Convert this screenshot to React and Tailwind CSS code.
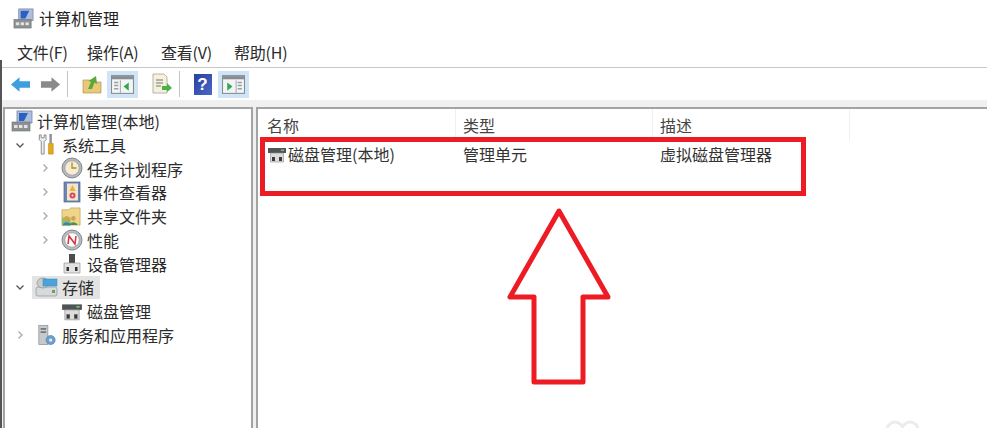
import React from 'react';

const FONT = '"Noto Sans CJK SC", "Liberation Sans", sans-serif';

// shared small drive icon used in tree and list
const DiskIcon = ({ className }) => (
    <svg viewBox="0 0 20 20" className={className}>
        <rect x="1" y="4" width="18" height="5" fill="#4f5455" />
        <rect x="14" y="5.5" width="3" height="1.5" fill="#7fc06a" />
        <path d="M3.5 9 h13 v9 h-13 Z" fill="#dcdcdc" stroke="#8a8a8a" strokeWidth="0.6" />
        <rect x="5" y="13" width="3" height="4" fill="#3c3c3c" />
        <rect x="12" y="13" width="3" height="4" fill="#3c3c3c" />
    </svg>
);

const ComputerIcon = ({ className }) => (
    <svg viewBox="0 0 22 22" className={className}>
        <rect x="6" y="1" width="15" height="12" fill="#aebfdb" stroke="#73859f" strokeWidth="0.8" />
        <path d="M8 3 h9 l-4 8 H8 Z" fill="#2a5fc4" />
        <rect x="1" y="12" width="18" height="9" fill="#8c9294" stroke="#6b6f70" strokeWidth="0.6" />
        <rect x="3" y="15" width="3.5" height="3" fill="#e4e4e4" />
        <rect x="8" y="15" width="3.5" height="3" fill="#e4e4e4" />
        <rect x="13" y="15" width="3.5" height="3" fill="#e4e4e4" />
    </svg>
);

const ToolsIcon = ({ className }) => (
    <svg viewBox="0 0 20 24" className={className}>
        <path d="M2 2 L2 7 L4 9 L4 22 L7 22 L7 9 L9 7 L9 2 L7 2 L7 5 L4 5 L4 2 Z" fill="#eceff0" stroke="#7a7f82" strokeWidth="0.9" />
        <rect x="12.5" y="1" width="2.6" height="10" fill="#8f9498" />
        <path d="M11.5 11 h5 v11 h-5 Z" fill="#e8a917" stroke="#a87a10" strokeWidth="0.5" />
    </svg>
);

const ClockIcon = ({ className }) => (
    <svg viewBox="0 0 22 22" className={className}>
        <circle cx="11" cy="11" r="10" fill="#b4b8bb" stroke="#83888b" />
        <circle cx="11" cy="11" r="7.2" fill="#f6ecd2" stroke="#8f9396" strokeWidth="0.6" />
        <path d="M11 5.5 V11 H15.5" fill="none" stroke="#b08a2c" strokeWidth="1.3" />
    </svg>
);

const EventIcon = ({ className }) => (
    <svg viewBox="0 0 20 22" className={className}>
        <rect x="2" y="1" width="16" height="20" fill="#6f86b4" stroke="#4d628c" strokeWidth="0.7" />
        <rect x="5" y="2.5" width="11" height="17" fill="#f1e6cc" />
        <path d="M10.5 4 L13.5 10 H7.5 Z" fill="#e9b52e" />
        <circle cx="10.5" cy="14.5" r="3" fill="#d94a55" />
        <circle cx="10.5" cy="14.5" r="1" fill="#f8e6e6" />
    </svg>
);

const ShareIcon = ({ className }) => (
    <svg viewBox="0 0 22 22" className={className}>
        <path d="M1 4 H8 L10 2 H20 V20 H1 Z" fill="#efd58a" stroke="#bd9c4e" strokeWidth="0.7" />
        <path d="M1 12 H10 V21 H1 Z" fill="#8fbf6a" />
        <circle cx="6" cy="13" r="2.4" fill="#d9a050" />
        <circle cx="13" cy="13" r="2.4" fill="#d9a050" />
        <path d="M2 20 c0 -4 8 -4 8 0 Z" fill="#3f7fc0" />
        <path d="M9 20 c0 -4 8 -4 8 0 Z" fill="#4d8f50" />
    </svg>
);

const PerfIcon = ({ className }) => (
    <svg viewBox="0 0 22 22" className={className}>
        <circle cx="11" cy="11" r="10" fill="#b9bcbe" stroke="#83888b" />
        <circle cx="11" cy="11" r="7.2" fill="#fbfbfb" stroke="#8f9396" strokeWidth="0.6" />
        <path d="M7 15 L8 7 L14 15 L15 7" fill="none" stroke="#d4343c" strokeWidth="1.5" />
    </svg>
);

const DeviceIcon = ({ className }) => (
    <svg viewBox="0 0 20 22" className={className}>
        <rect x="7" y="1" width="6" height="9" fill="#4a4d50" />
        <path d="M2 10 H18 V20 H2 Z" fill="#e2e2e2" stroke="#8a8a8a" strokeWidth="0.6" />
        <rect x="4.5" y="14" width="2.5" height="4" fill="#333" />
        <rect x="13" y="14" width="2.5" height="4" fill="#333" />
    </svg>
);

const StorageIcon = ({ className }) => (
    <svg viewBox="0 0 24 22" className={className}>
        <rect x="1" y="11" width="21" height="9" rx="2" fill="#d7dadb" stroke="#8b9092" strokeWidth="0.7" />
        <rect x="17" y="14" width="3" height="3" fill="#62a84f" />
        <ellipse cx="8" cy="7" rx="6" ry="5" fill="#c9cccd" stroke="#8b9092" strokeWidth="0.7" />
        <rect x="8" y="3" width="14" height="7" fill="#4ba3dc" stroke="#3b84b4" strokeWidth="0.5" />
    </svg>
);

const ServiceIcon = ({ className }) => (
    <svg viewBox="0 0 22 24" className={className}>
        <rect x="2" y="1" width="10" height="21" fill="#c6cacc" stroke="#7f8486" strokeWidth="0.7" />
        <rect x="4" y="4" width="6" height="1.5" fill="#5d6163" />
        <rect x="4" y="7.5" width="6" height="1.5" fill="#5d6163" />
        <circle cx="15" cy="17" r="5" fill="#6c9fd0" stroke="#4f7fad" strokeWidth="0.7" />
        <circle cx="15" cy="17" r="1.8" fill="#e2edf6" />
    </svg>
);

const Chevron = ({ open }) => (
    <svg viewBox="0 0 10 10" className="w-[10px] h-[10px]">
        <path
            d={open ? 'M1.5 3.5 L5 7 L8.5 3.5' : 'M3.5 1.5 L7 5 L3.5 8.5'}
            fill="none"
            stroke={open ? '#555' : '#a9a9a9'}
            strokeWidth="1.3"
        />
    </svg>
);

const TreeRow = ({ indent, arrow, icon, label, selected }) => (
    <div className="h-[23.8px] flex items-center text-[16px] text-[#2b2b2b] whitespace-nowrap">
        <div className={indent === 0 ? 'w-[2px]' : indent === 1 ? 'w-[10px]' : 'w-[35px]'} />
        {indent > 0 && (
            <div className="w-[17px] flex justify-start">
                {arrow && <Chevron open={arrow === 'open'} />}
            </div>
        )}
        <div className={`flex items-center h-full pl-[2px] ${selected ? 'bg-[#e3e3e3] pr-[6px]' : ''}`}>
            <div className="w-[25px] flex justify-center">{icon}</div>
            <span className="pl-[3px]">{label}</span>
        </div>
    </div>
);

const ToolbarButton = ({ active, children }) => (
    <div className={`h-[27px] w-[31px] flex items-center justify-center ${active ? 'bg-[#cfe4f7]' : ''}`}>
        {children}
    </div>
);

const PaneIcon = ({ side }) => (
    <svg viewBox="0 0 22 18" className="w-[23px] h-[19px]">
        <rect x="0.5" y="0.5" width="21" height="17" fill="#f2f4f5" stroke="#868c90" />
        <rect x="1" y="1" width="20" height="3" fill="#868c90" />
        {side === 'left' ? (
            <>
                <path d="M3 7 H7 M3 10 H7 M3 13 H7" stroke="#9aa0a4" strokeWidth="1.4" />
                <rect x="8.5" y="5" width="1" height="12" fill="#a8adb0" />
                <path d="M17 7 L12 11 L17 15 Z" fill="#2fa84a" />
            </>
        ) : (
            <>
                <path d="M15 7 H19 M15 10 H19 M15 13 H19" stroke="#9aa0a4" strokeWidth="1.4" />
                <rect x="13" y="5" width="1" height="12" fill="#a8adb0" />
                <path d="M5 7 L10 11 L5 15 Z" fill="#2fa84a" />
            </>
        )}
    </svg>
);

const App = () => {
    return (
        <div className="w-[987px] h-[428px] overflow-hidden bg-white relative flex flex-col" style={{ fontFamily: FONT }}>
            {/* title bar */}
            <div className="h-[36px] flex items-center pl-[13px] gap-[5px] text-[16px] text-[#222]">
                <ComputerIcon className="w-[21px] h-[21px]" />
                <span>计算机管理</span>
            </div>

            {/* menu */}
            <div className="h-[32px] flex items-center pl-[17px] text-[16px] tracking-[-0.2px] text-[#2b2b2b] border-b border-[#c9c9c9]">
                <span className="w-[70px]">文件(F)</span>
                <span className="w-[74px]">操作(A)</span>
                <span className="w-[73px]">查看(V)</span>
                <span>帮助(H)</span>
            </div>

            {/* toolbar */}
            <div className="h-[32px] flex items-center pl-[10px] bg-white">
                <svg viewBox="0 0 22 16" className="w-[21px] h-[17px]">
                    <path d="M1 8 L10 0.5 V4.5 H21 V11.5 H10 V15.5 Z" fill="#3d9fe0" />
                </svg>
                <svg viewBox="0 0 22 16" className="w-[21px] h-[17px] ml-[9px]">
                    <path d="M21 8 L12 0.5 V4.5 H1 V11.5 H12 V15.5 Z" fill="#8a8a8a" />
                </svg>
                <div className="w-px h-[26px] bg-[#c4c4c4] ml-[6px] mr-[8px]" />
                <ToolbarButton>
                    <svg viewBox="0 0 20 20" className="w-[20px] h-[20px]">
                        <path d="M1 6 H8 L9 8 H19 V19 H1 Z" fill="#e9c878" stroke="#b0935a" strokeWidth="0.7" />
                        <path d="M6 15 L9 8 L6.5 7 L14 2 L15 10 L12.5 8.5 L10 15 Z" fill="#5aa83a" />
                    </svg>
                </ToolbarButton>
                <ToolbarButton active><PaneIcon side="left" /></ToolbarButton>
                <div className="w-[8px]" />
                <ToolbarButton>
                    <svg viewBox="0 0 22 22" className="w-[22px] h-[22px]">
                        <path d="M2 1 H13 L16 4 V20 H2 Z" fill="#f5f1dd" stroke="#9a9a8a" strokeWidth="0.7" />
                        <path d="M5 7 H12 M5 10 H12 M5 13 H10" stroke="#777" strokeWidth="1" />
                        <path d="M11 13 H16 V10 L21 15 L16 19 V17 H11 Z" fill="#4fb04a" />
                    </svg>
                </ToolbarButton>
                <div className="w-px h-[26px] bg-[#c4c4c4] ml-[2px] mr-[7px]" />
                <ToolbarButton>
                    <div className="w-[18px] h-[21px] bg-gradient-to-br from-[#2a3f9e] to-[#4a68c8] text-white text-[17px] font-bold flex items-center justify-center leading-none" style={{ fontFamily: '"Liberation Sans", sans-serif' }}>?</div>
                </ToolbarButton>
                <ToolbarButton active><PaneIcon side="right" /></ToolbarButton>
            </div>

            {/* panels */}
            <div className="flex-1 min-h-0 bg-[#f0f0f0] pt-[7px] pl-[3px] flex gap-[3px]">
                <div className="w-[250px] bg-white border-2 border-[#a3a3a3] border-b-0">
                    <TreeRow indent={0} icon={<ComputerIcon className="w-[22px] h-[22px]" />} label="计算机管理(本地)" />
                    <TreeRow indent={1} arrow="open" icon={<ToolsIcon className="w-[20px] h-[23px]" />} label="系统工具" />
                    <TreeRow indent={2} arrow="closed" icon={<ClockIcon className="w-[22px] h-[22px]" />} label="任务计划程序" />
                    <TreeRow indent={2} arrow="closed" icon={<EventIcon className="w-[20px] h-[22px]" />} label="事件查看器" />
                    <TreeRow indent={2} arrow="closed" icon={<ShareIcon className="w-[21px] h-[21px]" />} label="共享文件夹" />
                    <TreeRow indent={2} arrow="closed" icon={<PerfIcon className="w-[22px] h-[22px]" />} label="性能" />
                    <TreeRow indent={2} icon={<DeviceIcon className="w-[20px] h-[22px]" />} label="设备管理器" />
                    <TreeRow indent={1} arrow="open" selected icon={<StorageIcon className="w-[24px] h-[22px]" />} label="存储" />
                    <TreeRow indent={2} icon={<DiskIcon className="w-[22px] h-[22px]" />} label="磁盘管理" />
                    <TreeRow indent={1} arrow="closed" icon={<ServiceIcon className="w-[20px] h-[23px]" />} label="服务和应用程序" />
                </div>

                <div className="flex-1 bg-white border-2 border-[#a3a3a3] border-r-0 border-b-0">
                    <div className="h-[32px] flex text-[16px] text-[#444]">
                        <div className="w-[198px] pl-[9px] pt-[4px] border-r border-[#f0f0f0]">名称</div>
                        <div className="w-[197px] pl-[7px] pt-[4px] border-r border-[#f0f0f0]">类型</div>
                        <div className="w-[197px] pl-[7px] pt-[4px] border-r border-[#f0f0f0]">描述</div>
                    </div>
                    <div className="flex items-center text-[16px] text-[#333] h-[26px]">
                        <div className="w-[198px] pl-[9px] flex items-center gap-[1px]">
                            <DiskIcon className="w-[20px] h-[20px]" />
                            <span>磁盘管理(本地)</span>
                        </div>
                        <div className="w-[197px] pl-[7px]">管理单元</div>
                        <div className="pl-[7px]">虚拟磁盘管理器</div>
                    </div>
                </div>
            </div>

            {/* dark window edge on the left */}
            <div className="absolute left-0 top-[60px] bottom-0 w-[2px] bg-[#555]" />

            {/* red annotations laid over the screenshot */}
            <div className="absolute left-[260px] top-[137px] w-[546px] h-[59px] border-[5px] border-[#ed1c24]" />
            <svg viewBox="0 0 987 428" className="absolute inset-0 w-[987px] h-[428px] pointer-events-none">
                <path d="M559 211 L510 297 H534 V382 H583 V297 L608 297 Z" fill="none" stroke="#ed1c24" strokeWidth="5" strokeLinejoin="round" />
            </svg>

            {/* faint watermark at the bottom edge */}
            <svg viewBox="0 0 60 20" className="absolute left-[884px] top-[420px] w-[60px] h-[20px]">
                <circle cx="11" cy="10" r="8" fill="none" stroke="#ececec" strokeWidth="3" />
                <circle cx="26" cy="10" r="8" fill="none" stroke="#ececec" strokeWidth="3" />
            </svg>
        </div>
    );
};

export default App;
